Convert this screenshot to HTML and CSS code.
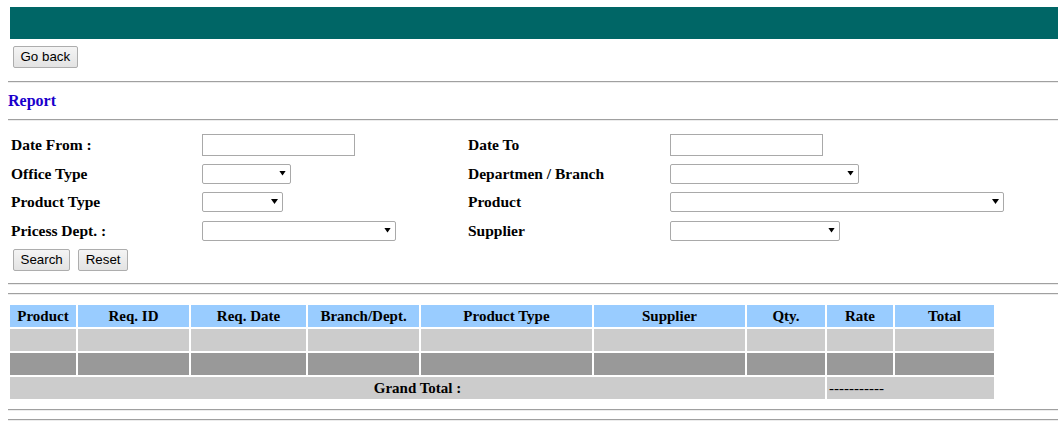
FILE: index.html
```html
<!DOCTYPE html>
<html>
<head>
<meta charset="utf-8">
<title>Report</title>
<link rel="stylesheet" href="styles.css">
</head>
<body>
<div class="topbar"></div>
<div class="back-row"><button class="btn" type="button">Go back</button></div>
<hr class="rule r1">
<div class="title">Report</div>
<hr class="rule r2">
<div class="filters">
  <label class="lbl">Date From :</label>
  <div class="fld"><input class="txt" type="text"></div>
  <label class="lbl">Date To</label>
  <div class="fld"><input class="txt" type="text"></div>

  <label class="lbl">Office Type</label>
  <div class="fld"><span class="sel w-office"><select></select></span></div>
  <label class="lbl">Departmen / Branch</label>
  <div class="fld"><span class="sel w-dept"><select></select></span></div>

  <label class="lbl">Product Type</label>
  <div class="fld"><span class="sel w-ptype"><select></select></span></div>
  <label class="lbl">Product</label>
  <div class="fld"><span class="sel w-product"><select></select></span></div>

  <label class="lbl">Pricess Dept. :</label>
  <div class="fld"><span class="sel w-pricess"><select></select></span></div>
  <label class="lbl">Supplier</label>
  <div class="fld"><span class="sel w-supplier"><select></select></span></div>
</div>
<div class="actions">
  <button class="btn" type="button">Search</button>
  <button class="btn" type="button">Reset</button>
</div>
<hr class="rule r3">
<hr class="rule r4">
<table class="grid">
  <thead>
    <tr>
      <th class="c1">Product</th>
      <th class="c2">Req. ID</th>
      <th class="c3">Req. Date</th>
      <th class="c4">Branch/Dept.</th>
      <th class="c5">Product Type</th>
      <th class="c6">Supplier</th>
      <th class="c7">Qty.</th>
      <th class="c8">Rate</th>
      <th class="c9">Total</th>
    </tr>
  </thead>
  <tbody>
    <tr class="odd"><td></td><td></td><td></td><td></td><td></td><td></td><td></td><td></td><td></td></tr>
    <tr class="even"><td></td><td></td><td></td><td></td><td></td><td></td><td></td><td></td><td></td></tr>
    <tr class="odd total-row">
      <td colspan="7" class="gt-label">Grand Total :</td>
      <td colspan="2" class="gt-value">-----------</td>
    </tr>
  </tbody>
</table>
<hr class="rule r5">
<hr class="rule r6">
</body>
</html>
```

FILE: styles.css
```css
html, body {
  margin: 0;
  padding: 0;
}
body {
  margin: 7px 0 0 8px;
  font-family: "Liberation Serif", "Times New Roman", serif;
  font-size: 15px;
  color: #000;
  background: #fff;
  overflow: hidden;
}
.topbar {
  margin-left: 2px;
  height: 32px;
  background: #006666;
}
.back-row {
  margin-top: 7px;
  padding-left: 5px;
  height: 22px;
  display: flex;
}
.btn {
  font-family: "Liberation Sans", Arial, sans-serif;
  font-size: 13.33px;
  color: #000;
  height: 22px;
  padding: 0 6.5px;
  border: 1px solid #adadad;
  border-radius: 2px;
  background: linear-gradient(#f4f4f4, #e3e3e3);
  line-height: 18px;
  margin: 0;
}
.rule {
  height: 0;
  margin: 0;
  border: 0;
  border-top: 1px solid #a0a0a0;
  border-bottom: 1px solid #ececec;
}
.r1 { margin-top: 13px; }
.title {
  margin-top: 8px;
  height: 20px;
  line-height: 20px;
  font-size: 16px;
  font-weight: bold;
  color: #1a00cc;
  margin-bottom: 8px;
}
.filters {
  margin-top: 10px;
  padding-left: 3px;
  display: grid;
  grid-template-columns: 191px 266px 202px 1fr;
  grid-template-rows: 28px 29px 28px 29px;
  align-items: center;
}
.lbl {
  font-weight: bold;
  font-size: 15.5px;
  white-space: nowrap;
}
.fld {
  display: flex;
  align-items: center;
}
.txt {
  box-sizing: border-box;
  width: 153px;
  height: 22px;
  margin: 0;
  border: 1px solid #a9a9a9;
  padding: 1px 2px;
  background: #fff;
}
.sel {
  position: relative;
  display: inline-block;
  height: 20px;
}
.sel select {
  box-sizing: border-box;
  appearance: none;
  -webkit-appearance: none;
  width: 100%;
  height: 20px;
  margin: 0;
  border: 1px solid #a9a9a9;
  border-radius: 2px;
  background: #fff;
  display: block;
}
.sel::after {
  content: "";
  position: absolute;
  right: 5px;
  top: 7px;
  width: 7px;
  height: 5px;
  background: #000;
  clip-path: polygon(0 0, 100% 0, 50% 100%);
  pointer-events: none;
}
.w-office { width: 89px; }
.w-ptype { width: 81px; }
.w-pricess { width: 194px; }
.w-dept { width: 189px; }
.w-product { width: 334px; }
.w-supplier { width: 170px; }
.actions {
  margin-top: 4px;
  padding-left: 5px;
  display: flex;
  gap: 8px;
  height: 22px;
}
.r3 { margin-top: 12px; }
.r4 { margin-top: 8px; }
.grid {
  margin-top: 8px;
  border-collapse: separate;
  border-spacing: 2px;
  table-layout: fixed;
  width: 988px;
  margin-left: 0;
}
.grid th, .grid td {
  height: 22px;
  padding: 0;
  box-sizing: border-box;
  font-size: 15px;
}
.grid th {
  background: #99ccff;
  font-weight: bold;
  text-align: center;
}
.c1 { width: 66px; }
.c2 { width: 111px; }
.c3 { width: 115px; }
.c4 { width: 111px; }
.c5 { width: 171px; }
.c6 { width: 151px; }
.c7 { width: 78px; }
.c8 { width: 66px; }
.c9 { width: 99px; }
.odd td { background: #cccccc; }
.even td { background: #999999; }
.gt-label {
  text-align: center;
  font-weight: bold;
}
.gt-value {
  text-align: left;
  padding-left: 2px !important;
}
.r5 { margin-top: 8px; }
.r6 { margin-top: 8px; }
```
